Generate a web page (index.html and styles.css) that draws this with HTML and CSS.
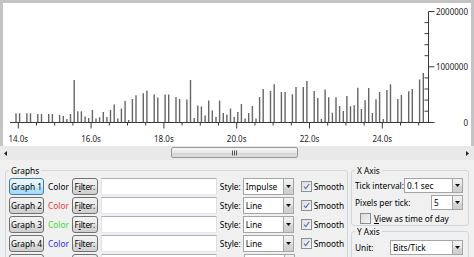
FILE: index.html
```html
<!DOCTYPE html>
<html>
<head>
<meta charset="utf-8">
<link rel="stylesheet" href="styles.css">
</head>
<body>
<div class="chart">
  <svg class="plot" width="468" height="143" viewBox="3 3 468 143">
    <path class="bars" d="M16 122v-8.7M19.6 122v-8.7M26.9 122v-8.7M30.5 122v-8.7M37.8 122v-8M41.5 122v-8M48.7 122v-8M52.4 122v-8M59.6 122v-7M63.3 122v-6M66.9 122v-3M70.5 122v-8M74.2 122v-42M77.8 122v-10.7M81.4 122v-10.7M85.1 122v-5.5M88.7 122v-4M92.4 122v-12M96 122v-3.5M99.6 122v-4.7M103.3 122v-10M106.9 122v-5M110.5 122v-12M114.2 122v-17.5M117.8 122v-3.5M121.4 122v-13.5M125.1 122v-21M128.7 122v-2M132.4 122v-23M136 122v-26.7M143.3 122v-28.7M146.9 122v-31.5M154.2 122v-27.5M157.8 122v-24.5M165.1 122v-27.5M168.7 122v-27.5M176 122v-25M179.6 122v-23M186.9 122v-22.5M190.5 122v-42M194.2 122v-4M197.8 122v-16.5M201.4 122v-15.5M205.1 122v-6.5M208.7 122v-21.5M212.3 122v-11.5M216 122v-5M219.6 122v-21.5M223.3 122v-9M226.9 122v-7.5M230.5 122v-13.5M234.2 122v-5M237.8 122v-10M241.4 122v-18M245.1 122v-3.5M248.7 122v-9M252.4 122v-16M256 122v-3.5M259.6 122v-25M263.2 122v-33M270.5 122v-31M274.2 122v-37.7M281.4 122v-30M285.1 122v-30M292.4 122v-27.7M296 122v-35M303.3 122v-35M306.9 122v-41M314.2 122v-31M317.8 122v-24M321.4 122v-3M325.1 122v-32.4M328.7 122v-24.7M332.4 122v-9.3M336 122v-24.7M339.6 122v-16M343.3 122v-11M346.9 122v-26M350.5 122v-15.7M354.2 122v-16.7M357.8 122v-34.3M361.4 122v-13M365.1 122v-21.7M368.7 122v-34M372.4 122v-9M376 122v-22.7M379.6 122v-30M383.3 122v-3M386.9 122v-32M390.5 122v-37.7M397.8 122v-23M401.4 122v-27M408.7 122v-30.7M412.3 122v-33M419.6 122v-42.4M423.3 122v-49"/>
    <path class="axis" d="M10 122.5H428.5M428.5 11.5V123"/>
    <path class="axis" d="M18.3 122.5v6M36.5 122.5v3M54.7 122.5v3M72.9 122.5v3M91.1 122.5v6M109.3 122.5v3M127.5 122.5v3M145.7 122.5v3M163.9 122.5v6M182.1 122.5v3M200.3 122.5v3M218.5 122.5v3M236.7 122.5v6M254.9 122.5v3M273.1 122.5v3M291.3 122.5v3M309.5 122.5v6M327.7 122.5v3M345.9 122.5v3M364.1 122.5v3M382.3 122.5v6M400.5 122.5v3M418.7 122.5v3"/>
    <path class="axis" d="M428.5 11.5h6M428.5 66.8h6M428.5 122.5h6M428.5 22.6h-4M428.5 33.6h-4M428.5 44.7h-4M428.5 55.7h-4M428.5 77.9h-4M428.5 89h-4M428.5 100.1h-4M428.5 111.2h-4"/>
    <g class="xlabels">
      <text x="18.3" y="142">14.0s</text>
      <text x="91.1" y="142">16.0s</text>
      <text x="163.9" y="142">18.0s</text>
      <text x="236.7" y="142">20.0s</text>
      <text x="309.5" y="142">22.0s</text>
      <text x="382.3" y="142">24.0s</text>
    </g>
    <g class="ylabels">
      <text x="468" y="14.5">2000000</text>
      <text x="468" y="69.8">1000000</text>
      <text x="468" y="125.5">0</text>
    </g>
  </svg>
</div>
<div class="hscroll">
  <svg class="arrow" width="14" height="14" viewBox="0 0 14 14"><path d="M3 7.5L6 5v5z"/></svg>
  <div class="track">
    <div class="thumb">
      <svg width="8" height="6" viewBox="0 0 8 6"><path d="M1.5 0.5v5M3.5 0.5v5M5.5 0.5v5"/></svg>
    </div>
  </div>
  <svg class="arrow" width="14" height="14" viewBox="0 0 14 14"><path d="M10 7.5L7 5v5z"/></svg>
</div>
<div class="panel">
  <fieldset class="group graphs">
    <legend>Graphs</legend>
    <div class="row">
      <span class="btn gbtn active">Graph 1</span>
      <span class="color c1">Color</span>
      <span class="btn fbtn">F<u>i</u>lter:</span>
      <span class="input"></span>
      <span class="lbl">Style:</span>
      <span class="combo style"><span class="ctext">Impulse</span><span class="drop"><svg width="5" height="3" viewBox="0 0 5 3"><path d="M0 0h5L2.5 3z"/></svg></span></span>
      <span class="check"><svg width="11" height="11" viewBox="0 0 11 11"><path d="M3 5.6l1.8 2L8.2 3"/></svg></span>
      <span class="smooth">Smooth</span>
    </div>
    <div class="row">
      <span class="btn gbtn">Graph 2</span>
      <span class="color c2">Color</span>
      <span class="btn fbtn">F<u>i</u>lter:</span>
      <span class="input"></span>
      <span class="lbl">Style:</span>
      <span class="combo style"><span class="ctext">Line</span><span class="drop"><svg width="5" height="3" viewBox="0 0 5 3"><path d="M0 0h5L2.5 3z"/></svg></span></span>
      <span class="check"><svg width="11" height="11" viewBox="0 0 11 11"><path d="M3 5.6l1.8 2L8.2 3"/></svg></span>
      <span class="smooth">Smooth</span>
    </div>
    <div class="row">
      <span class="btn gbtn">Graph 3</span>
      <span class="color c3">Color</span>
      <span class="btn fbtn">F<u>i</u>lter:</span>
      <span class="input"></span>
      <span class="lbl">Style:</span>
      <span class="combo style"><span class="ctext">Line</span><span class="drop"><svg width="5" height="3" viewBox="0 0 5 3"><path d="M0 0h5L2.5 3z"/></svg></span></span>
      <span class="check"><svg width="11" height="11" viewBox="0 0 11 11"><path d="M3 5.6l1.8 2L8.2 3"/></svg></span>
      <span class="smooth">Smooth</span>
    </div>
    <div class="row">
      <span class="btn gbtn">Graph 4</span>
      <span class="color c4">Color</span>
      <span class="btn fbtn">F<u>i</u>lter:</span>
      <span class="input"></span>
      <span class="lbl">Style:</span>
      <span class="combo style"><span class="ctext">Line</span><span class="drop"><svg width="5" height="3" viewBox="0 0 5 3"><path d="M0 0h5L2.5 3z"/></svg></span></span>
      <span class="check"><svg width="11" height="11" viewBox="0 0 11 11"><path d="M3 5.6l1.8 2L8.2 3"/></svg></span>
      <span class="smooth">Smooth</span>
    </div>
    <div class="row">
      <span class="btn gbtn"></span>
      <span class="spacer-color"></span>
      <span class="btn fbtn"></span>
      <span class="input"></span>
      <span class="spacer-style"></span>
      <span class="combo style"><span class="ctext"></span><span class="drop"></span></span>
    </div>
  </fieldset>
  <div class="axes">
    <fieldset class="group xaxis">
      <legend>X Axis</legend>
      <div class="arow">
        <span class="lbl">Tick interval:</span>
        <span class="combo tick"><span class="ctext">0.1 sec</span><span class="drop"><svg width="5" height="3" viewBox="0 0 5 3"><path d="M0 0h5L2.5 3z"/></svg></span></span>
      </div>
      <div class="arow">
        <span class="lbl">Pixels per tick:</span>
        <span class="combo ppt"><span class="ctext">5</span><span class="drop"><svg width="5" height="3" viewBox="0 0 5 3"><path d="M0 0h5L2.5 3z"/></svg></span></span>
      </div>
      <div class="arow crow">
        <span class="check off"></span>
        <span class="lbl"><u>V</u>iew as time of day</span>
      </div>
    </fieldset>
    <fieldset class="group yaxis">
      <legend>Y Axis</legend>
      <div class="arow">
        <span class="lbl">Unit:</span>
        <span class="combo unit"><span class="ctext">Bits/Tick</span><span class="drop"><svg width="5" height="3" viewBox="0 0 5 3"><path d="M0 0h5L2.5 3z"/></svg></span></span>
      </div>
    </fieldset>
  </div>
</div>
</body>
</html>
```
FILE: styles.css
```css
html, body {
  margin: 0;
  padding: 0;
}
body {
  width: 474px;
  height: 257px;
  overflow: hidden;
  background: #f0f0f0;
  font-family: "Noto Sans", "Open Sans", sans-serif;
  font-size: 8.3px;
  line-height: 11px;
  color: #000;
}
.chart {
  height: 143px;
  background: #fff;
  border: 3px solid #c4c4c4;
  border-bottom: none;
}
.plot {
  display: block;
}
.bars {
  stroke: #666;
  stroke-width: 1.4;
  fill: none;
}
.axis {
  stroke: #3a3a3a;
  stroke-width: 1;
  fill: none;
}
.xlabels text {
  font-family: "Noto Sans", sans-serif;
  font-size: 8px;
  text-anchor: middle;
  fill: #222;
}
.ylabels text {
  font-family: "Noto Sans", sans-serif;
  font-size: 8px;
  text-anchor: end;
  fill: #222;
}
.hscroll {
  height: 14px;
  display: flex;
  align-items: center;
  background: #e9e9e9;
  padding: 0 1px;
}
.arrow {
  display: block;
  flex: none;
}
.arrow path {
  fill: #222;
}
.track {
  flex: 1;
  height: 12px;
  padding-left: 156px;
  box-sizing: border-box;
}
.thumb {
  width: 127px;
  height: 11px;
  box-sizing: border-box;
  border: 1px solid #989898;
  border-radius: 2px;
  background: linear-gradient(#f7f7f7, #e6e6e6 50%, #d6d6d6 51%, #dcdcdc);
  display: flex;
  align-items: center;
  justify-content: center;
}
.thumb svg path {
  stroke: #555;
  stroke-width: 1;
}
.panel {
  display: flex;
  align-items: flex-start;
  padding: 5px 0 0 5px;
}
.group {
  margin: 0;
  border: 1px solid #cfd6dc;
  border-radius: 3px;
  box-sizing: border-box;
}
.group legend {
  padding: 0 2px;
  margin-left: 0;
  line-height: 11px;
}
.graphs {
  width: 343px;
  height: 110px;
  padding: 2px 0 0 3px;
}
.row {
  display: flex;
  align-items: center;
  height: 17px;
  margin-bottom: 2px;
  white-space: nowrap;
}
.btn {
  box-sizing: border-box;
  height: 17px;
  border: 1px solid #707070;
  border-radius: 3px;
  background: linear-gradient(#f2f2f2, #ebebeb 50%, #dddddd 51%, #cfcfcf);
  display: flex;
  align-items: center;
  justify-content: center;
}
.gbtn {
  width: 35px;
}
.gbtn.active {
  border-color: #3c7fb1;
  background: linear-gradient(#eaf6fd, #d9f0fc 50%, #bee6fd 51%, #a7d9f5);
}
.fbtn {
  width: 26px;
  margin-left: 3px;
  letter-spacing: -0.2px;
}
.color {
  margin-left: 4px;
}
.spacer-color {
  width: 21px;
  margin-left: 4px;
}
.spacer-style {
  width: 22px;
  margin-left: 3px;
}
.c1 { color: #000; }
.c2 { color: #e83a3a; }
.c3 { color: #3fd83f; }
.c4 { color: #3030e0; }
.input {
  box-sizing: border-box;
  width: 116px;
  height: 17px;
  margin-left: 3px;
  background: #fff;
  border: 1px solid;
  border-color: #abadb3 #dbdfe6 #e3e9ef #e2e3ea;
}
.lbl {
  margin-left: 3px;
}
.combo {
  box-sizing: border-box;
  height: 17px;
  display: flex;
  align-items: stretch;
  background: #fff;
  border: 1px solid #a5a5a5;
}
.combo .ctext {
  flex: 1;
  padding-left: 2px;
  display: flex;
  align-items: center;
}
.combo .drop {
  width: 9px;
  flex: none;
  border-left: 1px solid #a5a5a5;
  background: linear-gradient(#f2f2f2, #e6e6e6 50%, #d6d6d6 51%, #cfcfcf);
  display: flex;
  align-items: center;
  justify-content: center;
}
.combo .drop svg {
  display: block;
}
.combo .drop path {
  fill: #111;
}
.style {
  width: 51px;
  margin-left: 2px;
}
.check {
  box-sizing: border-box;
  width: 11px;
  height: 11px;
  flex: none;
  margin-left: 7px;
  border: 1px solid #8e8f8f;
  background: linear-gradient(135deg, #dcdee2, #f6f6f6);
  display: flex;
}
.check svg {
  display: block;
  margin: -1px;
}
.check path {
  stroke: #5a70aa;
  stroke-width: 1.2;
  fill: none;
}
.smooth {
  margin-left: 2px;
}
.axes {
  margin-left: 3px;
  display: flex;
  flex-direction: column;
}
.xaxis, .yaxis {
  width: 118px;
  padding: 2px 5px 0 3px;
}
.xaxis {
  height: 61px;
}
.yaxis {
  height: 40px;
  margin-top: 0;
}
.arow {
  display: flex;
  align-items: center;
  height: 15px;
  margin-bottom: 2px;
  white-space: nowrap;
}
.arow .lbl {
  margin-left: 0;
}
.arow .combo {
  margin-left: auto;
  height: 15px;
}
.tick { width: 59px; }
.ppt { width: 32px; }
.yaxis .arow {
  margin-top: 1px;
}
.unit { width: 73px; height: 16px; }
.crow {
  height: 13px;
}
.crow .check {
  margin-left: 5px;
}
.crow .lbl {
  margin-left: 3px;
}
.check.off {
  background: linear-gradient(135deg, #d8dade, #f4f4f4);
}
```
